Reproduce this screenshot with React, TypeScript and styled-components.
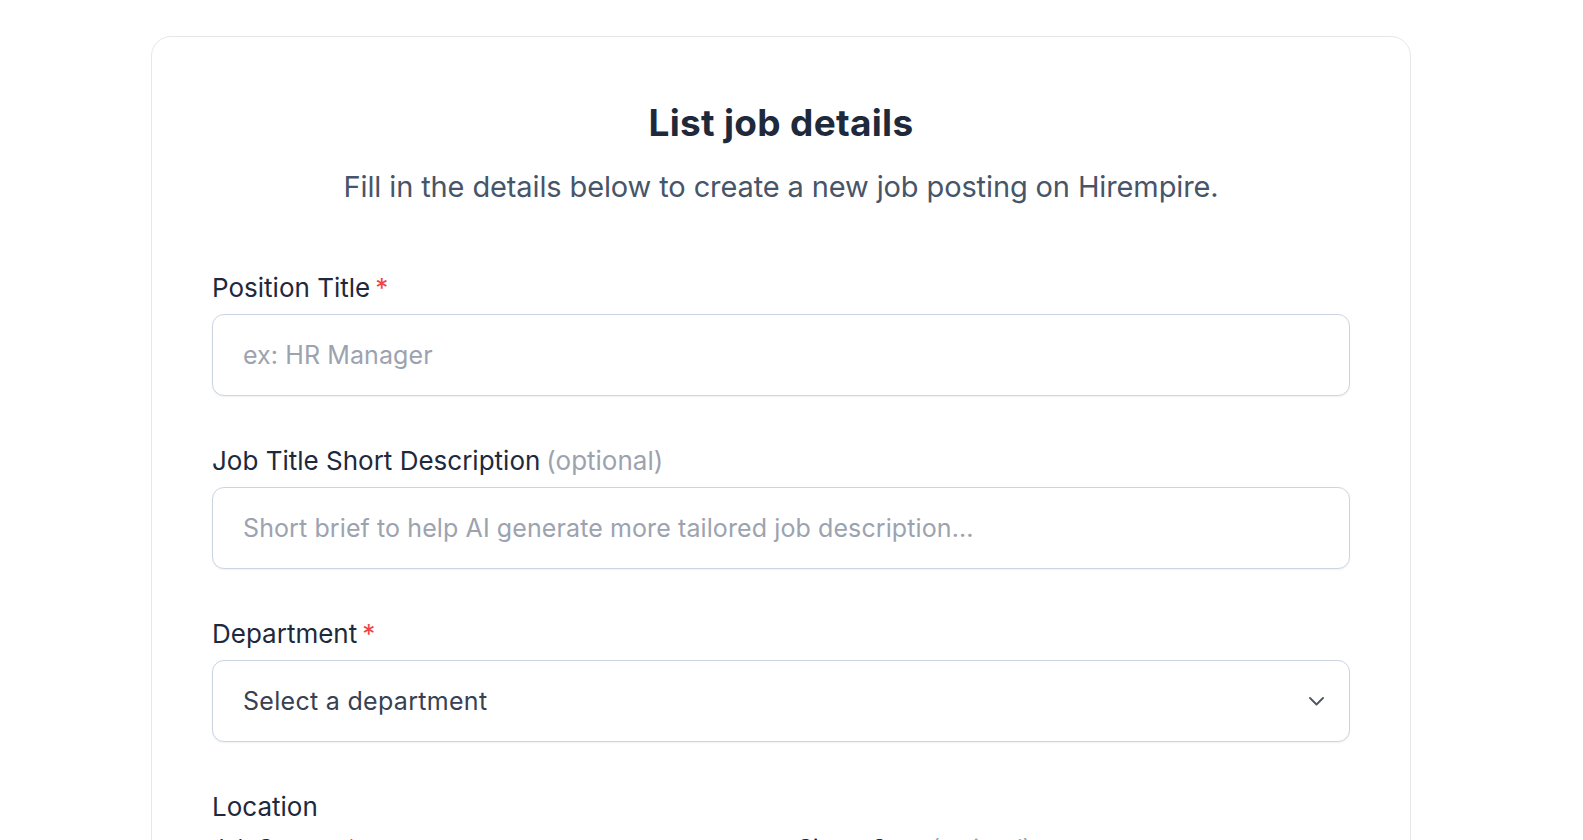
import React, { useState } from 'react';
import styled, { createGlobalStyle } from 'styled-components';

const GlobalStyle = createGlobalStyle`
  html, body {
    margin: 0;
    padding: 0;
    background: #ffffff;
    overflow: hidden;
  }
  body {
    font-family: Inter, "Noto Sans", Arial, sans-serif;
    color: #1f2937;
  }
  * {
    box-sizing: border-box;
  }
`;

const Page = styled.div`
  display: flex;
  justify-content: center;
  padding: 36px 21px 0 0;
`;

const Card = styled.div`
  width: 1260px;
  background: #ffffff;
  border: 1px solid #e5e7eb;
  border-radius: 20px;
  padding: 64px 60px 60px;
`;

const Header = styled.div`
  text-align: center;
  margin-bottom: 64px;
`;

const Title = styled.h1`
  margin: 0 0 22px;
  font-size: 37px;
  line-height: 44px;
  font-weight: 700;
  color: #1e293b;
  letter-spacing: 0.3px;
`;

const Subtitle = styled.p`
  margin: 0;
  font-size: 29px;
  line-height: 40px;
  font-weight: 400;
  color: #475569;
  letter-spacing: -0.12px;
`;

const Form = styled.form`
  display: flex;
  flex-direction: column;
  gap: 48px;
`;

const Field = styled.div`
  display: flex;
  flex-direction: column;
  gap: 9px;
`;

const Label = styled.label<{ $small?: boolean }>`
  font-size: ${p => (p.$small ? '22px' : '26px')};
  line-height: ${p => (p.$small ? '30px' : '34px')};
  font-weight: 400;
  color: #1e293b;
  letter-spacing: 0;
`;

const Required = styled.span`
  color: #ef4444;
  margin-left: 5px;
`;

const Optional = styled.span`
  color: #9ca3af;
  margin-left: 6px;
`;

const Input = styled.input`
  height: 82px;
  width: 100%;
  padding: 0 30px;
  border: 1px solid #cbd5e1;
  border-radius: 12px;
  background: #ffffff;
  box-shadow: 0 1px 2px rgba(15, 23, 42, 0.06);
  font-family: inherit;
  font-size: 25px;
  color: #374151;
  letter-spacing: 0.1px;
  outline: none;

  &::placeholder {
    color: #9ca3af;
  }
`;

const SelectBox = styled.div`
  display: flex;
  align-items: center;
  justify-content: space-between;
  height: 82px;
  padding: 0 25px 0 30px;
  border: 1px solid #cbd5e1;
  border-radius: 12px;
  background: #ffffff;
  box-shadow: 0 1px 2px rgba(15, 23, 42, 0.06);
  font-size: 25px;
  color: #374151;
  letter-spacing: 0.3px;
  cursor: pointer;
`;

const Chevron = styled.svg`
  width: 15px;
  height: 9px;
  color: #4b5563;
`;

const Section = styled.div`
  display: flex;
  flex-direction: column;
  gap: 8px;
`;

const TwoCols = styled.div`
  display: grid;
  grid-template-columns: 1fr 1fr;
  gap: 32px;
`;

const Select: React.FC<{ placeholder: string }> = ({ placeholder }) => (
  <SelectBox>
    <span>{placeholder}</span>
    <Chevron viewBox="0 0 15 9" fill="none">
      <path d="M1 1l6.5 6.5L14 1" stroke="currentColor" strokeWidth="1.8" strokeLinecap="round" strokeLinejoin="round" />
    </Chevron>
  </SelectBox>
);

export default function App() {
  const [title, setTitle] = useState('');
  const [brief, setBrief] = useState('');
  const [city, setCity] = useState('');

  return (
    <Page>
      <GlobalStyle />
      <Card>
        <Header>
          <Title>List job details</Title>
          <Subtitle>Fill in the details below to create a new job posting on Hirempire.</Subtitle>
        </Header>
        <Form onSubmit={e => e.preventDefault()}>
          <Field>
            <Label>
              Position Title<Required>*</Required>
            </Label>
            <Input value={title} onChange={e => setTitle(e.target.value)} placeholder="ex: HR Manager" />
          </Field>

          <Field>
            <Label>
              Job Title Short Description<Optional>(optional)</Optional>
            </Label>
            <Input
              value={brief}
              onChange={e => setBrief(e.target.value)}
              placeholder="Short brief to help AI generate more tailored job description..."
            />
          </Field>

          <Field>
            <Label>
              Department<Required>*</Required>
            </Label>
            <Select placeholder="Select a department" />
          </Field>

          <Section>
            <Label>Location</Label>
            <TwoCols>
              <Field>
                <Label $small>
                  Job Country<Required>*</Required>
                </Label>
                <Select placeholder="Select a country" />
              </Field>
              <Field>
                <Label $small>
                  City or State<Optional>(optional)</Optional>
                </Label>
                <Input value={city} onChange={e => setCity(e.target.value)} placeholder="ex: Lagos" />
              </Field>
            </TwoCols>
          </Section>
        </Form>
      </Card>
    </Page>
  );
}
